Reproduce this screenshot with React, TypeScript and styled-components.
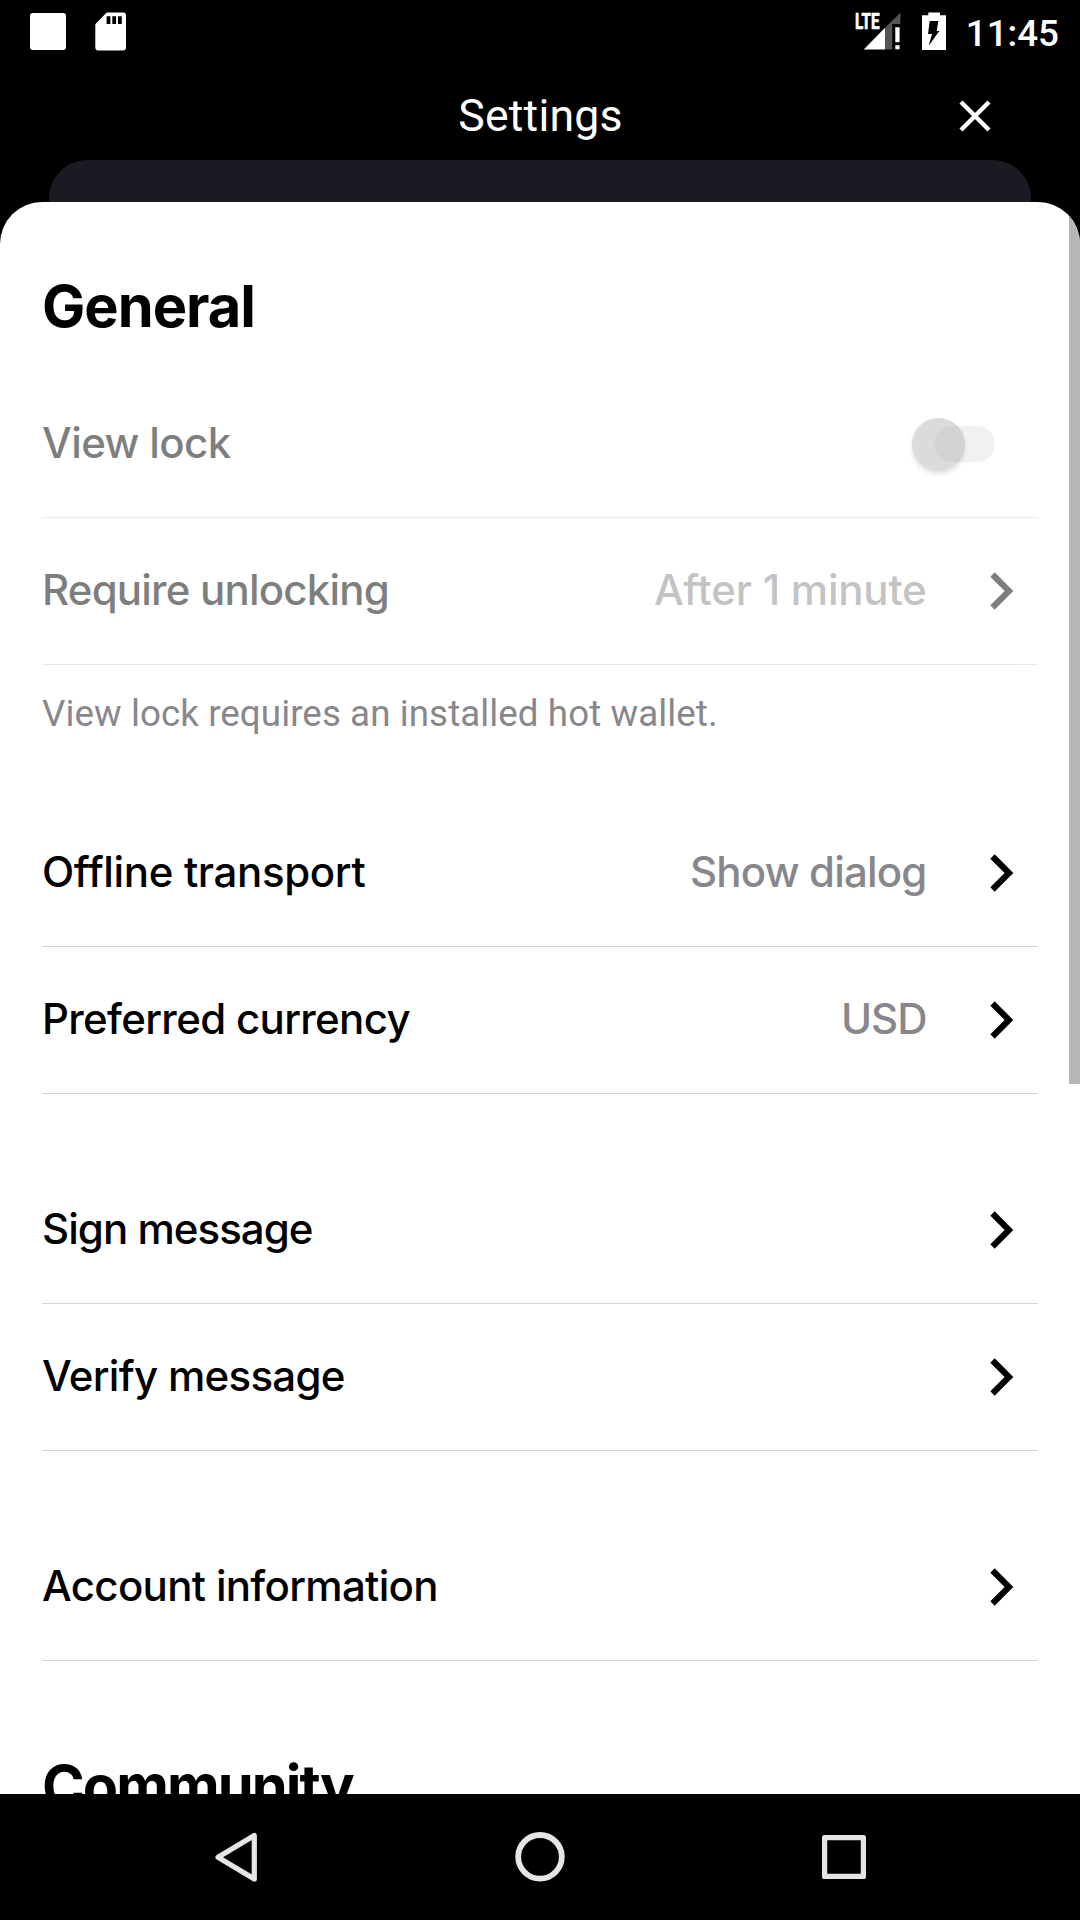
import React from 'react';
import styled, { createGlobalStyle } from 'styled-components';

const Global = createGlobalStyle`
  * { box-sizing: border-box; }
  body { margin: 0; background: #000; }
`;

const Screen = styled.div`
  width: 1080px;
  height: 1920px;
  background: #000;
  display: flex;
  flex-direction: column;
  overflow: hidden;
  font-family: Inter, sans-serif;
`;

const StatusBar = styled.div`
  height: 63px;
  flex: none;
  display: flex;
  align-items: center;
  padding: 0 21px 0 29.5px;
  color: #fff;
`;

const StatusSpacer = styled.div`
  flex: 1;
`;

const NotificationSquare = styled.div`
  width: 36px;
  height: 36.5px;
  border-radius: 3px;
  background: #fff;
  margin-right: 29.5px;
`;

const StatusIcons = styled.svg.attrs({ width: 91, height: 39, viewBox: '0 0 91 39' })`
  overflow: visible;
`;

const Clock = styled.div`
  width: 95px;
  font: 500 36.75px/63px Roboto, sans-serif;
  text-align: right;
  margin-left: 18px;
  padding-top: 3px;
`;

const TopBar = styled.header`
  height: 97px;
  flex: none;
  display: grid;
  grid-template-columns: 212px 1fr 212px;
  align-items: center;
  padding-top: 9px;
  color: #fff;
`;

const Title = styled.h1`
  grid-column: 2;
  margin: 0;
  text-align: center;
  font: 400 44.625px/60px Roboto, sans-serif;
  letter-spacing: 0.2px;
  padding-left: 1px;
`;

const CloseButton = styled.button`
  border: 0;
  padding: 0 0 0 1px;
  background: none;
  color: #fff;
  display: flex;
  justify-content: center;
`;

const BackCard = styled.div`
  height: 42px;
  flex: none;
  margin: 0 49px;
  border-radius: 38px 38px 0 0;
  background: #1a1a22;
`;

const Sheet = styled.main`
  height: 1592px;
  flex: none;
  position: relative;
  background: #fff;
  border-radius: 42px 42px 0 0;
  padding: 0 42px;
  overflow: hidden;
`;

const ScrollThumb = styled.div`
  position: absolute;
  top: 0;
  right: 0;
  width: 11px;
  height: 882px;
  background: #b7b7b7;
`;

const Heading = styled.h2<{ $top: number; $tracking: number }>`
  margin: 0;
  padding-top: ${(p) => p.$top}px;
  font-size: 57.75px;
  line-height: 70px;
  font-weight: 700;
  letter-spacing: ${(p) => p.$tracking}px;
  color: #000;
`;

const Group = styled.section<{ $top: number }>`
  padding-top: ${(p) => p.$top}px;
`;

const Row = styled.div<{ $disabled?: boolean }>`
  height: 147px;
  display: flex;
  align-items: center;
  border-bottom: 1px solid #d5d5d5;
  padding-right: 24px;
  opacity: ${(p) => (p.$disabled ? 0.5 : 1)};
`;

const RowText = styled.span<{ $tracking: number }>`
  font-size: 42px;
  line-height: 50px;
  font-weight: 500;
  letter-spacing: ${(p) => p.$tracking}px;
  padding-bottom: 2px;
  white-space: nowrap;
`;

const Label = styled(RowText)`
  flex: 1;
  color: #000;
`;

const Value = styled(RowText)`
  color: #88888c;
  margin-right: 63.5px;
`;

const Note = styled.p`
  margin: 0;
  padding-top: 25px;
  font: 400 36.75px/48px Roboto, sans-serif;
  letter-spacing: 0.07px;
  color: #88888c;
`;

const Switch = styled.span`
  margin-right: 19.5px;
  display: flex;
  align-items: center;
`;

const Knob = styled.span`
  width: 53px;
  height: 53px;
  border-radius: 50%;
  background: #b9b9b9;
  box-shadow: 0 3px 4px rgba(0, 0, 0, 0.22);
`;

const Track = styled.span`
  width: 61px;
  height: 36px;
  margin-left: -31.5px;
  border-radius: 18px;
  background: rgba(0, 0, 0, 0.1);
`;

const NavBar = styled.nav`
  height: 126px;
  flex: none;
  display: flex;
  justify-content: center;
  align-items: center;
  gap: 248px;
`;

const NavIcon = styled.svg.attrs({ width: 56, height: 56, viewBox: '0 0 56 56' })`
  fill: none;
  stroke: #e5e5e5;
  stroke-linejoin: round;
`;

const Chevron = () => (
  <svg width="24" height="40" viewBox="0 0 24 40" fill="none" stroke="#000" strokeWidth="6.1">
    <path d="M2.5 3.5L19 20L2.5 36.5" />
  </svg>
);

interface SettingRowProps {
  label: string;
  labelTracking: number;
  value?: string;
  valueTracking?: number;
  disabled?: boolean;
}

const SettingRow = ({ label, labelTracking, value, valueTracking = 0, disabled }: SettingRowProps) => (
  <Row $disabled={disabled}>
    <Label $tracking={labelTracking}>{label}</Label>
    {value && <Value $tracking={valueTracking}>{value}</Value>}
    <Chevron />
  </Row>
);

const SdCard = () => (
  <svg width="31" height="39" viewBox="0 0 31 39">
    <path
      fill="#fff"
      d="M12.5 .6H28a3 3 0 013 3V35.6a3 3 0 01-3 3H3.3a3 3 0 01-3-3V12.8a2 2 0 01.6-1.4L11 1.2a2 2 0 011.5-.6z"
    />
    <path d="M11.6 4.2h3.8v7.8h-3.8zM17.3 4.2h3.8v7.8h-3.8zM23 4.2h3.8v7.8H23z" fill="#000" />
  </svg>
);

const SignalAndBattery = () => (
  <StatusIcons>
    <text
      x="0"
      y="17.2"
      fill="#fff"
      stroke="#fff"
      strokeWidth="0.7"
      fontFamily="Roboto, sans-serif"
      fontWeight="700"
      fontSize="21.5"
      textLength="24.5"
      lengthAdjust="spacingAndGlyphs"
    >
      LTE
    </text>
    <path d="M8.7 37.4L30.3 15.6V37.4z" fill="#fff" />
    <path d="M30.3 15.6L45.4 .8V12H37.3V37.4H30.3z" fill="#555" />
    <path d="M40.3 15.3h4.3v15h-4.3zM40.3 33.3h4.3v4h-4.3z" fill="#fff" />
    <path d="M67 3.3H73.3V.4H85V3.3H91V38H67z" fill="#fff" />
    <path d="M74.7 9H83.3L81.7 19H84.3L73.7 33.7L77 22H73z" fill="#000" />
  </StatusIcons>
);

export default function App() {
  return (
    <Screen>
      <Global />
      <StatusBar>
        <NotificationSquare />
        <SdCard />
        <StatusSpacer />
        <SignalAndBattery />
        <Clock>11:45</Clock>
      </StatusBar>
      <TopBar>
        <Title>Settings</Title>
        <CloseButton aria-label="Close">
          <svg width="32" height="32" viewBox="0 0 32 32" stroke="#fff" strokeWidth="4.4">
            <path d="M2 2l28 28M30 2L2 30" />
          </svg>
        </CloseButton>
      </TopBar>
      <BackCard />
      <Sheet>
        <ScrollThumb />
        <Heading $top={69} $tracking={-1}>General</Heading>
        <Group $top={30}>
          <Row $disabled>
            <Label $tracking={-0.6}>View lock</Label>
            <Switch>
              <Knob />
              <Track />
            </Switch>
          </Row>
          <SettingRow
            label="Require unlocking"
            labelTracking={-0.8}
            value="After 1 minute"
            valueTracking={-0.22}
            disabled
          />
          <Note>View lock requires an installed hot wallet.</Note>
        </Group>
        <Group $top={62}>
          <SettingRow label="Offline transport" labelTracking={-0.35} value="Show dialog" valueTracking={-0.82} />
          <SettingRow label="Preferred currency" labelTracking={-0.66} value="USD" valueTracking={-1} />
        </Group>
        <Group $top={63}>
          <SettingRow label="Sign message" labelTracking={-0.95} />
          <SettingRow label="Verify message" labelTracking={-0.7} />
        </Group>
        <Group $top={63}>
          <SettingRow label="Account information" labelTracking={-0.68} />
        </Group>
        <Heading $top={90} $tracking={-1.95}>Community</Heading>
      </Sheet>
      <NavBar>
        <NavIcon>
          <path d="M10 28.3L46.3 6.6V50z" strokeWidth="5.2" />
        </NavIcon>
        <NavIcon>
          <circle cx="28" cy="27.8" r="21.8" strokeWidth="5.8" />
        </NavIcon>
        <NavIcon>
          <rect x="8.6" y="8.6" width="38.8" height="38.8" strokeWidth="5.2" />
        </NavIcon>
      </NavBar>
    </Screen>
  );
}
